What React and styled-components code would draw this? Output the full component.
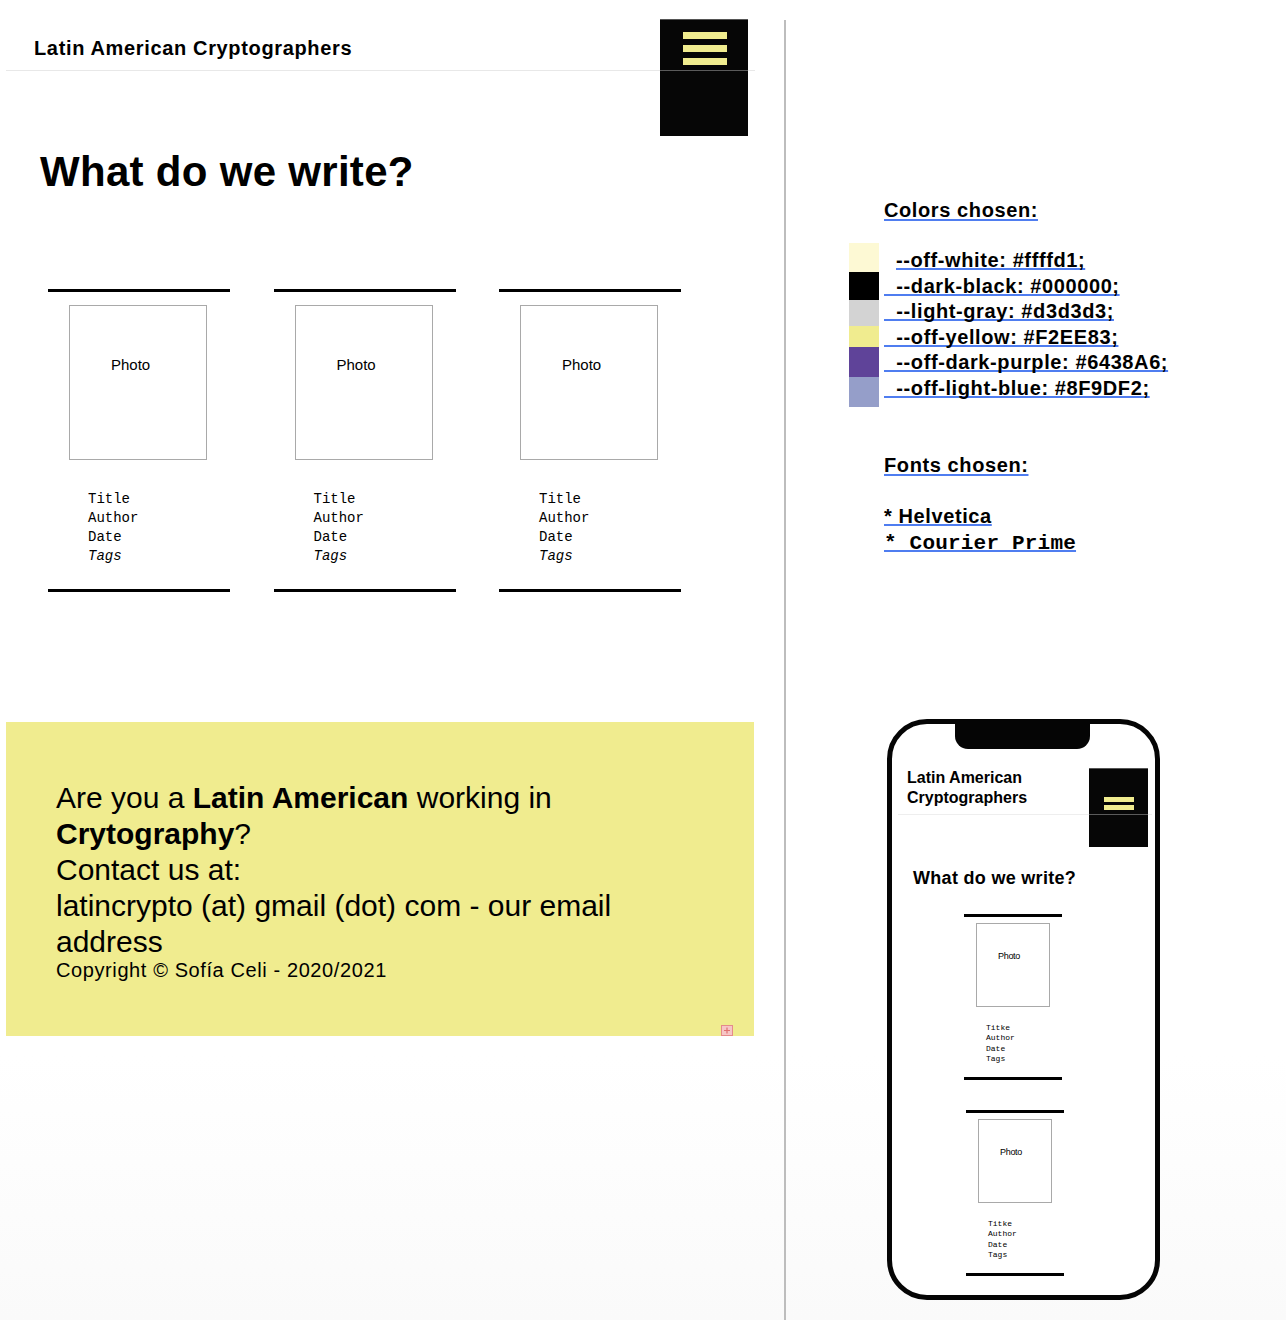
import React from "react";
import styled, { createGlobalStyle } from "styled-components";

const GlobalStyle = createGlobalStyle`
  html, body {
    margin: 0;
    padding: 0;
  }
  body {
    min-height: 1320px;
    background: linear-gradient(#ffffff 0%, #ffffff 80%, #fafafa 100%);
    font-family: "Liberation Sans", Arial, Helvetica, sans-serif;
    color: #000;
  }
`;

const yellow = "#f0ec8f";
const mono = `"Liberation Mono", "Courier New", monospace`;

const Page = styled.div`
  display: grid;
  grid-template-columns: 784px 2px 1fr;
  width: 1286px;
  min-height: 1320px;
`;

const LeftCol = styled.div`
  padding: 0 29px 0 6px;
`;

const Divider = styled.div`
  margin-top: 20px;
  background: #bdbdbd;
`;

const Header = styled.header`
  position: relative;
  height: 34px;
  padding-top: 36px;
  border-bottom: 1px solid #e8e8e8;
`;

const SiteTitle = styled.h1`
  margin: 0 0 0 28px;
  font-size: 20px;
  line-height: 24px;
  font-weight: 700;
  letter-spacing: 0.65px;
`;

const MenuBox = styled.div`
  position: absolute;
  left: ${({ $left }) => $left}px;
  top: ${({ $top }) => $top}px;
  width: ${({ $w }) => $w}px;
  height: ${({ $h }) => $h}px;
  background: #060606;
  border-top: 1px solid #555;
  box-sizing: border-box;
  display: flex;
  flex-direction: column;
  align-items: flex-start;
  gap: ${({ $gap }) => $gap}px;
  padding: ${({ $padTop }) => $padTop}px 0 0 ${({ $padLeft }) => $padLeft}px;

  &::after {
    content: "";
    position: absolute;
    left: 0;
    right: 0;
    top: ${({ $lineTop }) => $lineTop}px;
    height: 1px;
    background: #5a5a5a;
  }
`;

const Bar = styled.span`
  display: block;
  width: ${({ $w }) => $w}px;
  height: ${({ $h }) => $h}px;
  background: ${yellow};
`;

const Heading = styled.h2`
  margin: 77px 0 0 34px;
  font-size: 42px;
  line-height: 48px;
  font-weight: 700;
  letter-spacing: 0.3px;
`;

const CardGrid = styled.div`
  display: grid;
  grid-template-columns: repeat(3, 182px);
  column-gap: 43.5px;
  margin: 93px 0 0 42px;
`;

const Card = styled.article`
  border-top: 3px solid #000;
  border-bottom: 3px solid #000;
  padding: 13px 0 23px;
`;

const Photo = styled.div`
  margin-left: 21px;
  width: 138px;
  height: 155px;
  box-sizing: border-box;
  border: 1px solid #a9a9a9;
  padding: 50px 0 0 41px;
  font-size: 15px;
  line-height: 18px;
`;

const Info = styled.div`
  margin: 30px 0 0 40px;
  font-family: ${mono};
  font-size: 14px;
  line-height: 19px;
`;

const InfoLine = styled.div`
  font-style: ${({ $italic }) => ($italic ? "italic" : "normal")};
`;

const Footer = styled.footer`
  position: relative;
  margin-top: 130px;
  width: 748px;
  height: 314px;
  box-sizing: border-box;
  background: ${yellow};
  padding: 58px 98px 0 50px;
`;

const FooterText = styled.p`
  margin: 0;
  font-size: 30px;
  line-height: 36px;
`;

const Copyright = styled.p`
  margin: 0;
  font-size: 20px;
  line-height: 20px;
  letter-spacing: 0.6px;
`;

const Handle = styled.svg`
  position: absolute;
  right: 21px;
  bottom: 0;
`;

const RightCol = styled.div`
  display: flex;
  flex-direction: column;
  align-items: flex-start;
`;

const underline = `
  text-decoration: underline;
  text-decoration-color: #4f7df0;
  text-decoration-thickness: 2px;
  text-decoration-skip-ink: none;
`;

const NoteHeading = styled.h3`
  margin: ${({ $top }) => $top}px 0 0 98px;
  font-size: 20px;
  line-height: 24px;
  font-weight: 700;
  letter-spacing: 0.6px;
  ${underline}
  text-underline-offset: 2px;
`;

const Palette = styled.div`
  display: flex;
  gap: 5px;
  margin: 21px 0 0 63px;
`;

const Swatches = styled.div`
  display: flex;
  flex-direction: column;
  width: 30px;
`;

const Swatch = styled.div`
  height: ${({ $h }) => $h}px;
  background: ${({ $c }) => $c};
`;

const ColorList = styled.div`
  padding-top: 5px;
`;

const ColorLine = styled.div`
  font-size: 20px;
  line-height: 25.6px;
  font-weight: 700;
  letter-spacing: 0.6px;
  white-space: pre;
  padding-left: ${({ $indent }) => ($indent ? 12 : 0)}px;
  ${underline}
  text-underline-offset: 1px;
`;

const FontList = styled.div`
  margin: 26px 0 0 98px;
`;

const FontLine = styled.div`
  font-family: ${({ $mono }) => ($mono ? mono : "inherit")};
  font-size: ${({ $mono }) => ($mono ? 21 : 20)}px;
  line-height: 27px;
  font-weight: 700;
  letter-spacing: ${({ $mono }) => ($mono ? 0.2 : 0.6)}px;
  white-space: pre;
  ${underline}
  text-underline-offset: 1px;
`;

const Phone = styled.div`
  position: relative;
  margin: 162px 0 0 101px;
  width: 273px;
  height: 581px;
  box-sizing: border-box;
  border: 5px solid #050505;
  border-radius: 40px;
  background: #fff;
  overflow: hidden;
`;

const Notch = styled.div`
  position: absolute;
  left: 63px;
  top: -1px;
  width: 135px;
  height: 26px;
  background: #050505;
  border-radius: 0 0 13px 13px;
`;

const MiniHeader = styled.div`
  position: relative;
  margin: 0 3px 0 6px;
  padding: 44px 0 6px 9px;
  border-bottom: 1px solid #eeeeee;
`;

const MiniTitle = styled.div`
  font-size: 16px;
  line-height: 20px;
  font-weight: 700;
  width: 150px;
`;

const MiniHeading = styled.div`
  margin: 52px 0 0 21px;
  font-size: 18px;
  line-height: 22px;
  font-weight: 700;
  letter-spacing: 0.3px;
`;

const MiniCard = styled.div`
  width: 98px;
  margin: ${({ $top }) => $top}px 0 0 ${({ $left }) => $left}px;
  border-top: 3px solid #000;
  border-bottom: 3px solid #000;
  padding: 6px 0 13px;
`;

const MiniPhoto = styled.div`
  margin-left: 12px;
  width: 74px;
  height: 84px;
  box-sizing: border-box;
  border: 1px solid #a9a9a9;
  padding: 27px 0 0 21px;
  font-size: 9px;
  line-height: 11px;
  letter-spacing: -0.3px;
`;

const MiniInfo = styled.div`
  margin: 16px 0 0 22px;
  font-family: ${mono};
  font-size: 8px;
  line-height: 10.3px;
`;

const cards = [1, 2, 3];

const colors = [
  { c: "#fdf9d4", h: 29, text: "--off-white: #ffffd1;", indent: true },
  { c: "#000000", h: 28, text: "\u00a0\u00a0--dark-black: #000000;" },
  { c: "#d3d3d3", h: 26, text: "\u00a0\u00a0--light-gray: #d3d3d3;" },
  { c: "#f0ec8f", h: 21, text: "\u00a0\u00a0--off-yellow: #F2EE83;" },
  { c: "#5f4399", h: 30, text: "\u00a0\u00a0--off-dark-purple: #6438A6;" },
  { c: "#959ec9", h: 30, text: "\u00a0\u00a0--off-light-blue: #8F9DF2;" },
];

function PostCard() {
  return (
    <Card>
      <Photo>Photo</Photo>
      <Info>
        <InfoLine>Title</InfoLine>
        <InfoLine>Author</InfoLine>
        <InfoLine>Date</InfoLine>
        <InfoLine $italic>Tags</InfoLine>
      </Info>
    </Card>
  );
}

function MiniPost({ top, left }) {
  return (
    <MiniCard $top={top} $left={left}>
      <MiniPhoto>Photo</MiniPhoto>
      <MiniInfo>
        <div>Titke</div>
        <div>Author</div>
        <div>Date</div>
        <div>Tags</div>
      </MiniInfo>
    </MiniCard>
  );
}

export default function App() {
  return (
    <>
      <GlobalStyle />
      <Page>
        <LeftCol>
          <Header>
            <SiteTitle>Latin American Cryptographers</SiteTitle>
            <MenuBox $left={654} $top={19} $w={88} $h={117} $gap={6} $padTop={12} $padLeft={23} $lineTop={50}>
              <Bar $w={44} $h={7} />
              <Bar $w={44} $h={7} />
              <Bar $w={44} $h={7} />
            </MenuBox>
          </Header>

          <Heading>What do we write?</Heading>

          <CardGrid>
            {cards.map((n) => (
              <PostCard key={n} />
            ))}
          </CardGrid>

          <Footer>
            <FooterText>
              Are you a <b>Latin American</b> working in <b>Crytography</b>?
              <br />
              Contact us at:
              <br />
              latincrypto (at) gmail (dot) com - our email address
            </FooterText>
            <Copyright>Copyright © Sofía Celi - 2020/2021</Copyright>
            <Handle width="12" height="11" viewBox="0 0 12 11">
              <rect x="0.5" y="0.5" width="11" height="10" fill="#f6c6c6" stroke="#e58b8b" />
              <path d="M6 2.5v6M3 5.5h6" stroke="#e07070" strokeWidth="1.2" />
            </Handle>
          </Footer>
        </LeftCol>

        <Divider />

        <RightCol>
          <NoteHeading $top={198}>Colors chosen:</NoteHeading>
          <Palette>
            <Swatches>
              {colors.map((s) => (
                <Swatch key={s.c} $c={s.c} $h={s.h} />
              ))}
            </Swatches>
            <ColorList>
              {colors.map((s) => (
                <ColorLine key={s.text} $indent={s.indent}>
                  {s.text}
                </ColorLine>
              ))}
            </ColorList>
          </Palette>

          <NoteHeading $top={46}>Fonts chosen:</NoteHeading>
          <FontList>
            <FontLine>* Helvetica</FontLine>
            <FontLine $mono>* Courier Prime</FontLine>
          </FontList>

          <Phone>
            <Notch />
            <MiniHeader>
              <MiniTitle>Latin American Cryptographers</MiniTitle>
              <MenuBox $left={191} $top={44} $w={59} $h={79} $gap={3} $padTop={28} $padLeft={15} $lineTop={45}>
                <Bar $w={30} $h={5} />
                <Bar $w={30} $h={5} />
              </MenuBox>
            </MiniHeader>
            <MiniHeading>What do we write?</MiniHeading>
            <MiniPost top={25} left={72} />
            <MiniPost top={30} left={74} />
          </Phone>
        </RightCol>
      </Page>
    </>
  );
}
